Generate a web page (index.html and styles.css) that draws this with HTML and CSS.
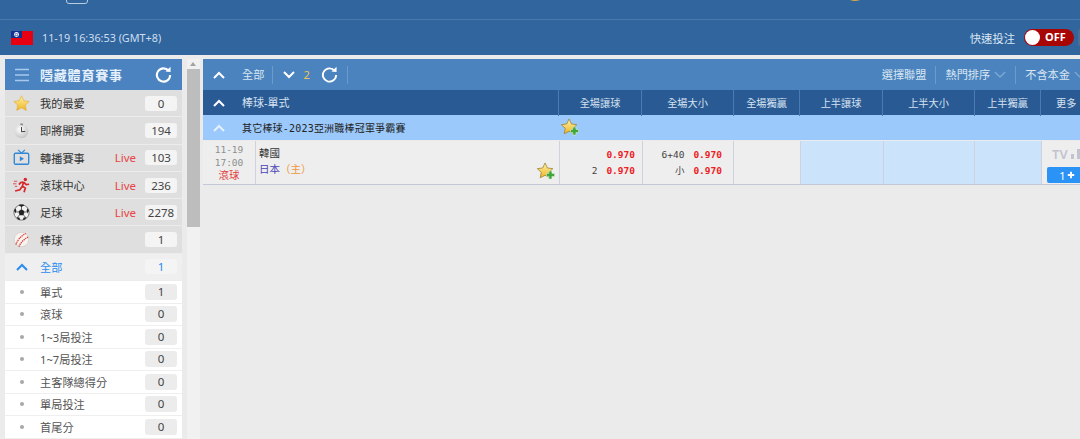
FILE: index.html
```html
<!DOCTYPE html>
<html lang="zh-Hant">
<head>
  <meta charset="UTF-8" />
  <title>隱藏體育賽事</title>
  <link rel="stylesheet" href="styles.css">
</head>
<body>
  <svg class="defs" width="0" height="0">
    <defs>
      <linearGradient id="gold" x1="0" y1="0" x2="0" y2="1">
        <stop offset="0" stop-color="#fff3a8"/>
        <stop offset="1" stop-color="#f0b421"/>
      </linearGradient>
      <radialGradient id="dial" cx=".4" cy=".35" r=".8">
        <stop offset="0" stop-color="#ffffff"/>
        <stop offset="1" stop-color="#b9b9b9"/>
      </radialGradient>
      <symbol id="star-plus" viewBox="0 0 20 20">
        <path d="M8.500 1l2.500 5.300 5.700.7-4.200 3.900 1.100 5.700-5.100-2.600-5.100 2.600 1.100-5.700L.3 7 6 6.300z" fill="url(#gold)" stroke="#a08a3a" stroke-width=".9"/>
        <path d="M12.500 9.500h3.200V12h2.800v3.200h-2.800v2.800h-3.200v-2.800H10V12h2.500z" fill="#3fa63c" stroke="#dff0d5" stroke-width=".6"/>
      </symbol>
    </defs>
  </svg>

  <!-- Top bar -->
  <header class="topbar">
    <div class="topbar-strip">
      <span class="nav-tab"></span>
      <span class="nav-coin"></span>
    </div>
    <div class="topbar-info">
      <svg class="flag" viewBox="0 0 22 14">
        <rect width="22" height="14" fill="#e60012"/>
        <rect width="11" height="7" fill="#13318f"/>
        <circle cx="5.500" cy="3.500" r="2.400" fill="#fff"/>
        <circle cx="5.500" cy="3.500" r="1.500" fill="#13318f"/>
        <circle cx="5.500" cy="3.500" r="1.100" fill="#fff"/>
      </svg>
      <span class="clock">11-19 16:36:53 (GMT+8)</span>
      <span class="quick-label">快速投注</span>
      <span class="toggle"><i></i>OFF</span>
      <span class="toggle-next"></span>
    </div>
  </header>

  <div class="content">
    <!-- Sidebar -->
    <aside class="sidebar">
      <div class="side-head">
        <svg class="burger" viewBox="0 0 14 14"><path d="M0 1.500h14M0 7h14M0 12.500h14" stroke="#a9c9ea" stroke-width="1.400"/></svg>
        <span class="side-title">隱藏體育賽事</span>
        <svg class="refresh" viewBox="0 0 18 18"><path d="M14.500 5.200A7 7 0 1 0 16 9.500" fill="none" stroke="#fff" stroke-width="2.200"/><path d="M11 5.800l5.500.6V.8z" fill="#fff"/></svg>
      </div>

      <div class="side-row">
        <svg class="side-icon" viewBox="0 0 20 20"><path d="M10 1l2.800 5.800 6.200.8-4.500 4.300 1.100 6.200L10 15.100l-5.600 3 1.100-6.200L1 7.600l6.200-.8z" fill="url(#gold)" stroke="#e0a92a" stroke-width=".7"/></svg>
        <span class="side-name">我的最愛</span><b class="count">0</b>
      </div>
      <div class="side-row">
        <svg class="side-icon" viewBox="0 0 20 20"><circle cx="10" cy="11" r="8" fill="url(#dial)"/><path d="M10 6v5.500l4.500-.5" fill="none" stroke="#333" stroke-width="1.100"/><path d="M9 1.500l3 .5-.5 2-3-.5z" fill="#8c8c8c"/></svg>
        <span class="side-name">即將開賽</span><b class="count">194</b>
      </div>
      <div class="side-row">
        <svg class="side-icon" viewBox="0 0 20 20"><rect x="1.500" y="5" width="17" height="13" rx="1.500" fill="none" stroke="#2f88d8" stroke-width="1.600"/><path d="M6 1l4 4 4-4" fill="none" stroke="#2f88d8" stroke-width="1.400"/><path d="M8 8.500l5 3-5 3z" fill="#2f88d8"/></svg>
        <span class="side-name">轉播賽事</span><em class="live">Live</em><b class="count">103</b>
      </div>
      <div class="side-row">
        <svg class="side-icon" viewBox="0 0 20 20"><circle cx="14.500" cy="3" r="2" fill="#d8262c"/><path d="M12.500 6L9 6.500 7 9M12.500 6l3 3 3.500-.5M12.500 6L11 11l3.500 2-1.500 5M11 11l-3 4-5.500 1.500" fill="none" stroke="#d8262c" stroke-width="2"/><path d="M1 5h4M0 8h4M2 11h3" stroke="#d8262c" stroke-width=".9"/></svg>
        <span class="side-name">滾球中心</span><em class="live">Live</em><b class="count">236</b>
      </div>
      <div class="side-row">
        <svg class="side-icon" viewBox="0 0 20 20"><circle cx="10" cy="10" r="9" fill="#f2f2f2" stroke="#333" stroke-width=".7"/><path d="M10 6.500l3.300 2.400-1.300 3.900H8l-1.300-3.900zM10 1.500V6M2 9l4 .5M18 9l-4 .5M5 16l3-3.500M15 16l-3-3.500" fill="#222" stroke="#222" stroke-width=".8"/><path d="M6.500 1.500L10 3.500l3.500-2-1.500-.8H8zM1.200 7.500l1.500 3.800 1.300-3.800-1-2.500zM18.800 7.500l-1.500 3.800L16 7.500l1-2.500zM5.800 18.300l-1.600-2.800 3.300.5 1 2.800zM14.200 18.300l1.600-2.800-3.300.5-1 2.800z" fill="#222"/></svg>
        <span class="side-name">足球</span><em class="live">Live</em><b class="count">2278</b>
      </div>
      <div class="side-row">
        <svg class="side-icon" viewBox="0 0 20 20"><circle cx="10" cy="10" r="8.500" fill="#f8f3f0" stroke="#c9c1bb" stroke-width=".6"/><path d="M3.500 16C5 11 9 6 15 3M7 18.500c2-5 6-9 11-11.500" fill="none" stroke="#d23a30" stroke-width="1.500" stroke-dasharray="1.600 .8"/></svg>
        <span class="side-name">棒球</span><b class="count">1</b>
      </div>

      <div class="side-row side-active">
        <svg class="side-icon chev" viewBox="0 0 14 10"><path d="M2 8l5-5 5 5" fill="none" stroke="#2a8cf0" stroke-width="2"/></svg>
        <span class="side-name">全部</span><b class="count">1</b>
      </div>

      <div class="sub-row"><i class="dot"></i><span class="side-name">單式</span><b class="count">1</b></div>
      <div class="sub-row"><i class="dot"></i><span class="side-name">滾球</span><b class="count">0</b></div>
      <div class="sub-row"><i class="dot"></i><span class="side-name">1~3局投注</span><b class="count">0</b></div>
      <div class="sub-row"><i class="dot"></i><span class="side-name">1~7局投注</span><b class="count">0</b></div>
      <div class="sub-row"><i class="dot"></i><span class="side-name">主客隊總得分</span><b class="count">0</b></div>
      <div class="sub-row"><i class="dot"></i><span class="side-name">單局投注</span><b class="count">0</b></div>
      <div class="sub-row"><i class="dot"></i><span class="side-name">首尾分</span><b class="count">0</b></div>
    </aside>

    <!-- Scrollbar -->
    <div class="scrollbar">
      <span class="scroll-arrow"></span>
      <span class="scroll-thumb"></span>
    </div>

    <!-- Main table -->
    <main class="board">
      <div class="toolbar">
        <svg class="chev-w" viewBox="0 0 14 10"><path d="M2 8l5-5 5 5" fill="none" stroke="#fff" stroke-width="2"/></svg>
        <span class="tool-all">全部</span>
        <svg class="chev-w chev-down" viewBox="0 0 14 10"><path d="M2 2l5 5 5-5" fill="none" stroke="#fff" stroke-width="2"/></svg>
        <span class="tool-num">2</span>
        <svg class="tool-refresh" viewBox="0 0 18 18"><path d="M14.500 5.200A7 7 0 1 0 16 9.500" fill="none" stroke="#fff" stroke-width="2"/><path d="M11 5.800l5.500.6V.8z" fill="#fff"/></svg>
        <span class="tool-sep"></span>
        <span class="tool-right">選擇聯盟</span>
        <span class="tool-right tool-line">熱門排序<svg class="caret" viewBox="0 0 14 8"><path d="M1 1l6 6 6-6" fill="none" stroke="#7ea8d6" stroke-width="1.500"/></svg></span>
        <span class="tool-right tool-line tool-last">不含本金<svg class="caret" viewBox="0 0 14 8"><path d="M1 1l6 6 6-6" fill="none" stroke="#7ea8d6" stroke-width="1.500"/></svg></span>
      </div>

      <div class="grid grid-head">
        <div class="head-title">
          <svg class="chev-w" viewBox="0 0 14 10"><path d="M2 8l5-5 5 5" fill="none" stroke="#fff" stroke-width="2"/></svg>
          <span>棒球-單式</span>
        </div>
        <div>全場讓球</div>
        <div>全場大小</div>
        <div>全場獨贏</div>
        <div>上半讓球</div>
        <div>上半大小</div>
        <div>上半獨贏</div>
        <div class="head-more">更多</div>
      </div>

      <div class="league">
        <svg class="chev-w" viewBox="0 0 14 10"><path d="M2 8l5-5 5 5" fill="none" stroke="#e4f0fe" stroke-width="2"/></svg>
        <span class="league-name">其它棒球-2023亞洲職棒冠軍爭霸賽</span>
        <svg class="star-add" viewBox="0 0 20 20"><use href="#star-plus"/></svg>
      </div>

      <div class="grid grid-row">
        <div class="cell-time">11-19<br>17:00<br><span class="running">滾球</span></div>
        <div class="cell-team">
          <div>韓國</div>
          <div class="home">日本<span class="home-tag">（主）</span></div>
          <svg class="star-add team-star" viewBox="0 0 20 20"><use href="#star-plus"/></svg>
        </div>
        <div class="cell-odds odds-hdp">
          <div><span class="odd">0.970</span></div>
          <div>2<span class="odd">0.970</span></div>
        </div>
        <div class="cell-odds">
          <div>6+40<span class="odd">0.970</span></div>
          <div>小<span class="odd">0.970</span></div>
        </div>
        <div></div>
        <div class="cell-empty"></div>
        <div class="cell-empty"></div>
        <div class="cell-empty"></div>
        <div class="cell-more">
          <span class="tv">TV<i></i><i class="tall"></i></span>
          <span class="more-btn">1<svg viewBox="0 0 10 10"><path d="M5 1v8M1 5h8" stroke="#fff" stroke-width="2.400"/></svg></span>
        </div>
      </div>
    </main>
  </div>
</body>
</html>
```

FILE: styles.css
```css
html, body {
  margin: 0;
  padding: 0;
  height: 439px;
  overflow: hidden;
  background: #ebebeb;
  font-family: "Noto Sans", "Noto Sans CJK TC", sans-serif;
  font-size: 12px;
  color: #333;
}

.defs {
  position: absolute;
}

svg {
  flex: none;
  display: block;
}

/* top bar */
.topbar {
  height: 55px;
  background: #30659e;
  color: #dbe7f3;
  overflow: hidden;
}

.topbar-strip {
  height: 19px;
  border-bottom: 1px solid #4878ac;
  position: relative;
}

.nav-tab {
  position: absolute;
  left: 66px;
  top: -8px;
  width: 20px;
  height: 10px;
  border: 1px solid #b9cde2;
  border-radius: 3px;
}

.nav-coin {
  position: absolute;
  left: 849px;
  top: -4px;
  width: 12px;
  height: 5px;
  background: #dca94c;
  border-radius: 50%;
}

.topbar-info {
  height: 35px;
  display: flex;
  align-items: center;
  padding-left: 11px;
}

.flag {
  width: 22px;
  height: 14px;
}

.clock {
  margin-left: 9px;
  font-size: 10.800px;
  color: #cfdeee;
}

.quick-label {
  margin-left: auto;
  margin-right: 9px;
  font-size: 11.300px;
}

.toggle {
  width: 50px;
  height: 17px;
  box-sizing: border-box;
  padding-left: 21px;
  background: #a80505;
  border-radius: 9px;
  color: #fff;
  font-weight: bold;
  font-size: 11px;
  line-height: 16px;
  position: relative;
}

.toggle i {
  position: absolute;
  left: 1px;
  top: 1px;
  width: 15px;
  height: 15px;
  border-radius: 50%;
  background: #fff;
}

.toggle-next {
  width: 2px;
  height: 17px;
  margin-left: 4px;
  background: #4a6f97;
  border-radius: 2px 0 0 2px;
}

/* page columns */
.content {
  display: flex;
  align-items: flex-start;
  padding: 4px 0 0 5px;
}

/* sidebar */
.sidebar {
  width: 177px;
  flex: none;
  background: #fff;
}

.side-head {
  height: 31px;
  display: flex;
  align-items: center;
  padding: 0 10px;
  background: #4a83c0;
}

.burger {
  width: 14px;
  height: 14px;
}

.side-title {
  margin-left: 11px;
  font-size: 13px;
  font-weight: bold;
  letter-spacing: .8px;
  color: #e6f0fa;
}

.refresh {
  width: 17px;
  height: 17px;
  margin-left: auto;
}

.side-row {
  height: 27.300px;
  box-sizing: border-box;
  display: flex;
  align-items: center;
  padding: 0 5px 0 8px;
  background: #dfdfdf;
  border-bottom: 1px solid #ececec;
}

.side-icon {
  width: 17px;
  height: 17px;
  margin-right: 2px;
}

.side-name {
  margin-left: 8px;
  font-size: 11.200px;
  color: #333;
}

.live {
  margin-left: auto;
  font-style: normal;
  font-size: 11.500px;
  color: #e84545;
}

.count {
  width: 32px;
  height: 15px;
  margin-left: auto;
  background: #f4f4f4;
  border-radius: 3px;
  text-align: center;
  font-weight: normal;
  font-size: 11.500px;
  line-height: 15px;
  color: #444;
}

.live + .count {
  margin-left: 9px;
}

.side-active {
  background: #efefef;
}

.side-active .side-name,
.side-active .count {
  color: #2a8cf0;
}

.side-icon.chev {
  width: 14px;
  height: 10px;
  margin: 0 3px 0 2px;
}

.sub-row {
  height: 22.500px;
  box-sizing: border-box;
  display: flex;
  align-items: center;
  padding: 0 5px 0 15px;
  border-bottom: 1px solid #efefef;
}

.sub-row .side-name {
  margin-left: 16px;
  color: #555;
}

.sub-row .count {
  height: 16px;
  background: #ececec;
  line-height: 16px;
}

.dot {
  width: 4px;
  height: 4px;
  border-radius: 50%;
  background: #a8a8a8;
}

/* scrollbar */
.scrollbar {
  width: 13px;
  height: 380px;
  margin-left: 5px;
  flex: none;
  background: #f1f1f1;
  position: relative;
}

.scroll-arrow {
  position: absolute;
  left: 3px;
  top: 3px;
  border: 3.500px solid transparent;
  border-top: 0;
  border-bottom: 4px solid #a3a3a3;
}

.scroll-thumb {
  position: absolute;
  left: 0;
  top: 10px;
  width: 13px;
  height: 158px;
  background: #bdbdbd;
}

/* main */
.board {
  flex: 1;
  margin-left: 3px;
  min-width: 0;
  overflow: hidden;
}

.toolbar {
  height: 31px;
  display: flex;
  align-items: center;
  padding-left: 9px;
  background: #4a83bd;
  color: #d9e6f3;
  font-size: 11.200px;
  white-space: nowrap;
}

.chev-w {
  width: 14px;
  height: 10px;
}

.tool-all {
  margin-left: 16px;
  padding-right: 8px;
  border-right: 1px solid #6b9acb;
  line-height: 18px;
}

.chev-down {
  margin-left: 9px;
}

.tool-num {
  margin-left: 7px;
  color: #e9c75a;
}

.tool-refresh {
  width: 17px;
  height: 17px;
  margin-left: 11px;
}

.tool-sep {
  width: 1px;
  height: 18px;
  margin-left: 9px;
  background: #6b9acb;
}

.tool-right {
  margin-left: auto;
  display: flex;
  align-items: center;
  line-height: 18px;
}

.tool-line {
  margin-left: 9px;
  padding-left: 9px;
  border-left: 1px solid #6b9acb;
}

.tool-last {
  margin-right: -6px;
}

.caret {
  width: 12px;
  height: 7px;
  margin-left: 4px;
}

.grid {
  display: grid;
  grid-template-columns: 52px 304px 83px 91px 67px 83px 91px 67px 1fr;
}

.grid-head {
  height: 25px;
  grid-template-columns: 355px 83px 92px 66px 83px 92px 66px 1fr;
  background: #2a5a94;
  color: #d5e2f0;
  font-size: 10.200px;
  line-height: 26px;
  text-align: center;
}

.grid-head > div {
  border-left: 1px solid #4a7cb2;
  white-space: nowrap;
}

.grid-head > .head-title {
  border-left: 0;
  display: flex;
  align-items: center;
  padding-left: 9px;
  font-size: 11px;
}

.head-title span {
  margin-left: 16px;
}

.head-more {
  text-align: left;
  padding-left: 15px;
}

.league {
  height: 25px;
  display: flex;
  align-items: center;
  padding-left: 9px;
  background: #9bc9fb;
  color: #222;
}

.league-name {
  margin-left: 16px;
  width: 319px;
  font-family: "DejaVu Sans Mono", "Noto Sans CJK TC", monospace;
  font-size: 10px;
  letter-spacing: .2px;
}

.star-add {
  width: 19px;
  height: 19px;
}

.grid-row {
  height: 44px;
  margin-top: 1px;
  background: #eeeeee;
  border-bottom: 1px solid #c4c8d6;
  box-sizing: border-box;
  overflow: hidden;
}

.grid-row > div {
  border-left: 1px solid #cfd2dc;
}

.grid-row > div:first-child {
  border-left: 0;
}

.cell-time {
  text-align: center;
  font-family: "DejaVu Sans Mono", "Noto Sans CJK TC", monospace;
  font-size: 9.500px;
  line-height: 13px;
  color: #8f8f8f;
  padding-top: 2px;
}

.running {
  color: #e23c3c;
  font-size: 10.500px;
}

.cell-team {
  position: relative;
  padding: 4px 0 0 3px;
  font-size: 10.500px;
  line-height: 16px;
  color: #333;
}

.home {
  color: #4a45b5;
}

.home-tag {
  color: #f0973c;
}

.team-star {
  position: absolute;
  right: 3px;
  bottom: 3px;
}

.cell-odds {
  padding: 6px 11px 0 0;
  text-align: right;
  font-family: "DejaVu Sans Mono", "Noto Sans CJK TC", monospace;
  font-size: 9.500px;
  line-height: 16px;
  color: #444;
}

.odds-hdp {
  padding-right: 7px;
}

.odd {
  margin-left: 9px;
  color: #ee1c25;
  font-weight: bold;
}

.grid-row > .cell-empty {
  background: #cce3fc;
}

.cell-more {
  padding: 5px 0 0 10px;
  background: #eeeeee;
  white-space: nowrap;
}

.tv {
  display: flex;
  align-items: flex-end;
  gap: 2px;
  height: 16px;
  color: #c3c3d0;
  font-weight: 600;
  font-size: 13px;
  line-height: 16px;
}

.tv i {
  width: 3px;
  height: 5px;
  background: #c3c3d0;
  margin: 0 0 3px 1px;
}

.tv .tall {
  height: 10px;
}

.more-btn {
  display: flex;
  align-items: center;
  justify-content: center;
  gap: 1px;
  width: 40px;
  height: 16px;
  margin: 5px 0 0 -5px;
  background: #2a93f5;
  border-radius: 2px;
  color: #fff;
  font-size: 11px;
}

.more-btn svg {
  width: 8px;
  height: 8px;
}
```
